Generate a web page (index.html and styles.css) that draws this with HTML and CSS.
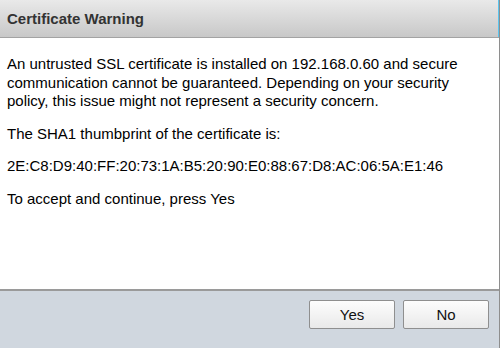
FILE: index.html
```html
<!DOCTYPE html>
<html>
<head>
<meta charset="utf-8">
<link rel="stylesheet" href="styles.css">
</head>
<body>
<div class="dialog">
  <div class="header">Certificate Warning</div>
  <div class="content">
    <p>An untrusted SSL certificate is installed on 192.168.0.60 and secure communication cannot be guaranteed. Depending on your security policy, this issue might not represent a security concern.</p>
    <p>The SHA1 thumbprint of the certificate is:</p>
    <p>2E:C8:D9:40:FF:20:73:1A:B5:20:90:E0:88:67:D8:AC:06:5A:E1:46</p>
    <p>To accept and continue, press Yes</p>
  </div>
  <div class="footer">
    <button class="btn">Yes</button>
    <button class="btn">No</button>
  </div>
</div>
</body>
</html>
```
FILE: styles.css
```css
html, body {
  margin: 0;
  padding: 0;
  background: #ffffff;
}
.dialog {
  width: 500px;
  height: 348px;
  display: flex;
  flex-direction: column;
  border-right: 1px solid #8e8e8e;
  box-sizing: border-box;
  font-family: "Liberation Sans", Arial, sans-serif;
}
.header {
  height: 38px;
  box-sizing: border-box;
  border-bottom: 1px solid #a3a3a3;
  background: linear-gradient(#e9e9e9, #c8c8c8);
  color: #333333;
  font-weight: bold;
  font-size: 15px;
  padding-left: 7px;
  display: flex;
  align-items: center;
  box-shadow: inset -1px 0 0 #5bc4ee;
}
.content {
  flex: 1;
  background: #ffffff;
  padding: 17px 7px 0 7px;
  color: #000000;
  font-size: 15px;
  line-height: 18.5px;
}
.content p {
  margin: 0 0 14px 0;
}
.content p:first-child + p {
  margin-top: 1px;
}
.footer {
  height: 59px;
  box-sizing: border-box;
  border-top: 2px solid #9a9a9a;
  background: #d0d7df;
  display: flex;
  justify-content: flex-end;
  align-items: flex-start;
  gap: 8px;
  padding: 9px 10px 0 0;
}
.btn {
  width: 86px;
  height: 29px;
  border: 1px solid #8f8f8f;
  border-radius: 2px;
  background: linear-gradient(#fdfdfd, #e9e9e9);
  font-family: "Liberation Sans", Arial, sans-serif;
  font-size: 15px;
  color: #111111;
  padding: 0;
}
```
